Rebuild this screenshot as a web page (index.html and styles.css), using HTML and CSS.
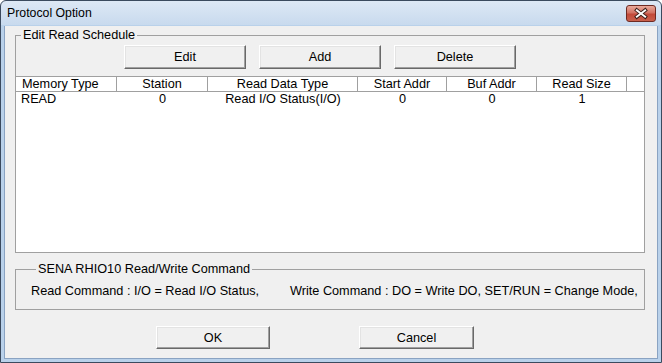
FILE: index.html
```html
<!DOCTYPE html>
<html lang="en">
<head>
  <meta charset="utf-8" />
  <title>Protocol Option</title>
  <link rel="stylesheet" href="styles.css">
</head>
<body>
  <div class="window">
    <!-- Title bar -->
    <header class="titlebar">
      <span class="title">Protocol Option</span>
      <button class="close" aria-label="Close">
        <svg width="30" height="17" viewBox="0 0 30 17">
          <path d="M10.5 5 L19.5 12 M19.5 5 L10.5 12" stroke="#3a1f1a" stroke-width="4" stroke-linecap="square" fill="none"/>
          <path d="M10.5 5 L19.5 12 M19.5 5 L10.5 12" stroke="#fff" stroke-width="2" stroke-linecap="square" fill="none"/>
        </svg>
      </button>
    </header>

    <main class="client">
      <fieldset class="group schedule">
        <legend>Edit Read Schedule</legend>
        <div class="toolbar">
          <button class="btn">Edit</button>
          <button class="btn">Add</button>
          <button class="btn">Delete</button>
        </div>
        <div class="list">
          <div class="list-row list-head">
            <span class="cell first">Memory Type</span>
            <span class="cell">Station</span>
            <span class="cell">Read Data Type</span>
            <span class="cell">Start Addr</span>
            <span class="cell">Buf Addr</span>
            <span class="cell">Read Size</span>
            <span class="cell filler"></span>
          </div>
          <div class="list-row">
            <span class="cell first">READ</span>
            <span class="cell">0</span>
            <span class="cell">Read I/O Status(I/O)</span>
            <span class="cell">0</span>
            <span class="cell">0</span>
            <span class="cell">1</span>
          </div>
        </div>
      </fieldset>

      <fieldset class="group command">
        <legend>SENA RHIO10 Read/Write Command</legend>
        <p class="cmd">
          <span class="cmd-read">Read Command : I/O = Read I/O Status,</span><span>Write Command : DO = Write DO, SET/RUN = Change Mode,</span>
        </p>
      </fieldset>

      <div class="actions">
        <button class="btn btn-ok">OK</button>
        <button class="btn btn-cancel">Cancel</button>
      </div>
    </main>
  </div>
</body>
</html>
```

FILE: styles.css
```css
:root{
  --face:#f0f0f0;
  --line:#a0a0a0;
  --dark:#696969;
  --frame:#b9d1ea;
}

*{box-sizing:border-box;margin:0;padding:0}
body{
  width:662px;height:363px;overflow:hidden;
  font-family:'Liberation Sans',Arial,sans-serif;font-size:12.7px;color:#000;
  background:#fff;
}

/* —— Window frame —— */
.window{
  width:662px;height:363px;display:flex;flex-direction:column;
  border:1px solid #3b4a5e;border-radius:6px 6px 0 0;
  background:linear-gradient(#dde8f5,#c8daee 24px,var(--frame) 24px);
}
.titlebar{
  height:25px;flex:none;display:flex;align-items:flex-start;justify-content:space-between;
  padding:0 5px 0 6px;
}
.title{line-height:25px;font-size:12.3px;color:#000}
.close{
  margin-top:4px;width:30px;height:17px;border:1px solid #6e2a22;border-radius:3px;
  background:linear-gradient(#e9a99b,#d27364 45%,#c24a3a 55%,#c9604c);
  display:flex;align-items:center;justify-content:center;padding:0;
}
.close svg{display:block}

.client{
  flex:1;margin:0 3px 3px;background:var(--face);
  border:1px solid #8aa3c2;border-top:none;
  display:flex;flex-direction:column;
}

/* —— Group boxes —— */
.group{
  margin:2px 12px 0 10px;border:1px solid var(--line);
  min-inline-size:0;
}
.group legend{margin-left:5px;padding:0 2px;line-height:14px}

.schedule{border-bottom:none;padding:3px 0 0}
.toolbar{display:flex;gap:13px;padding-left:108px}

.btn{
  font:inherit;color:#000;background:var(--face);cursor:pointer;
  border:1px solid;border-color:#fff var(--dark) var(--dark) #fff;
  box-shadow:inset -1px -1px 0 var(--line),inset 1px 1px 0 #e3e3e3;
}
.toolbar .btn{width:122px;height:24px}

/* —— List view —— */
.list{
  margin:7px -1px 0;height:177px;background:#fff;
  border:1px solid var(--line);
}
.list-row{display:grid;grid-template-columns:101px 91px 150px 89px 90px 90px 1fr;height:15px;line-height:14px}
.list-head{height:15px;border-bottom:1px solid var(--line);background:#fff}
.list-head .cell{border-right:1px solid var(--line);box-shadow:inset -2px 0 0 #fff}
.list-head .filler{border-right:none}
.cell{text-align:center;white-space:nowrap;overflow:hidden}
.cell.first{text-align:left;padding-left:5px}
.list-head .first{padding-left:6px}

.command{margin-top:9px;padding:8px 0 11px 15px}
.cmd{line-height:14px;white-space:nowrap}
.cmd-read{display:inline-block;width:259px}

/* —— Dialog buttons —— */
.actions{display:flex;gap:89px;padding-left:151px;margin-top:16px}
.actions .btn{height:23px}
.btn-ok{width:114px}
.btn-cancel{width:115px}
```
